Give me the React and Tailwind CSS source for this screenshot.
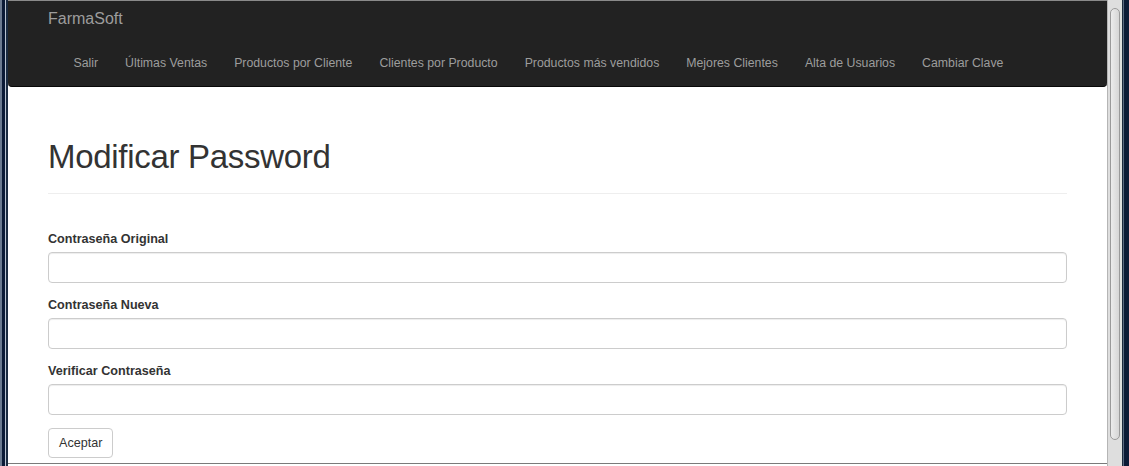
const navLinks = [
  "Salir",
  "Últimas Ventas",
  "Productos por Cliente",
  "Clientes por Producto",
  "Productos más vendidos",
  "Mejores Clientes",
  "Alta de Usuarios",
  "Cambiar Clave",
];

const fields = [
  { id: "original", label: "Contraseña Original" },
  { id: "nueva", label: "Contraseña Nueva" },
  { id: "verificar", label: "Verificar Contraseña" },
];

export default function App() {
  return (
    <div className="flex h-[466px] w-[1129px] overflow-hidden bg-white font-['Liberation_Sans',Arial,sans-serif] text-[13px] text-[#333]">
      {/* left window frame */}
      <div className="flex w-[8px] shrink-0">
        <div className="w-[2px] bg-[#6b7a90]"></div>
        <div className="w-[3px] bg-[#0b1a36]"></div>
        <div className="w-[1px] bg-[#b8c2d0]"></div>
        <div className="w-[2px] bg-[#1a2a40]"></div>
      </div>

      <div className="flex w-[1099px] shrink-0 flex-col">
        <div className="flex h-[463px] flex-col overflow-hidden">
          <nav className="h-[87px] shrink-0 rounded-b-[4px] border-t border-b border-t-[#8a8a8a] border-b-[#080808] bg-[#222]">
            <div className="flex h-[36px] items-center pl-[40px] text-[16px] text-[#9d9d9d]">
              FarmaSoft
            </div>
            <ul className="flex h-[52px] items-center pl-[52px]">
              {navLinks.map((link) => (
                <li key={link} className="px-[13.5px] text-[12.3px] text-[#9d9d9d]">
                  {link}
                </li>
              ))}
            </ul>
          </nav>

          <div className="px-10">
            <div className="mt-[50px] border-b border-[#eee] pb-[16px]">
              <h1 className="text-[33px] leading-[40px] font-normal tracking-[-0.3px]">Modificar Password</h1>
            </div>

            <form className="mt-[36px]">
              {fields.map((f) => (
                <div key={f.id} className="mb-[13px]">
                  <label htmlFor={f.id} className="mb-[4px] block text-[12.6px] leading-[18px] font-bold">
                    {f.label}
                  </label>
                  <input
                    id={f.id}
                    type="password"
                    className="block h-[31px] w-full rounded-[4px] border border-[#ccc] bg-white px-3 shadow-[inset_0_1px_1px_rgba(0,0,0,0.075)] outline-none"
                  />
                </div>
              ))}
              <button
                type="button"
                className="h-[30px] rounded-[4px] border border-[#ccc] bg-white px-[10px] text-[12.6px] text-[#333]"
              >
                Aceptar
              </button>
            </form>
          </div>
        </div>
        <div className="h-[1px] bg-[#7a7a7a]"></div>
        <div className="flex-1 bg-white"></div>
      </div>

      {/* scrollbar */}
      <div className="flex w-[15px] shrink-0 flex-col border-l border-[#b5b5b5] bg-[#dedede] pt-[8px] pb-[26px]">
        <div className="mx-[2px] flex-1 rounded-full border border-[#9a9a9a] bg-gradient-to-r from-[#ececec] to-[#d6d6d6]"></div>
      </div>

      {/* right window frame */}
      <div className="flex w-[7px] shrink-0">
        <div className="w-[1px] bg-[#1c2a3e]"></div>
        <div className="w-[1px] bg-[#5a6a80]"></div>
        <div className="flex-1 bg-[#0b1a36]"></div>
      </div>
    </div>
  );
}
